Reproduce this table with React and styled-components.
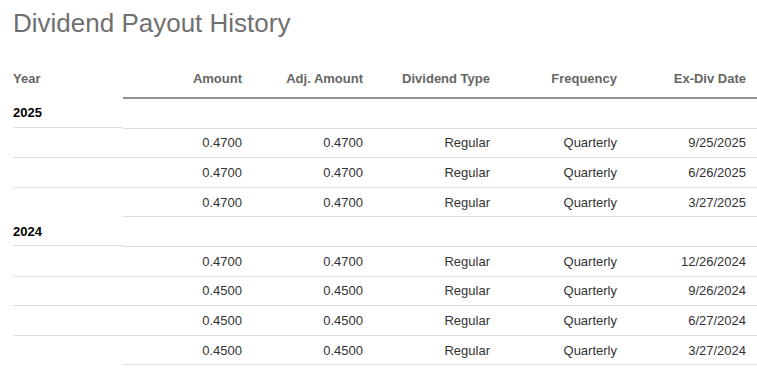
import React from "react";
import styled, { createGlobalStyle } from "styled-components";

const Global = createGlobalStyle`
  html, body { margin: 0; padding: 0; background: #fff; }
  body { font-family: "Liberation Sans", Arial, sans-serif; }
`;

const Page = styled.div`
  padding: 8px 0 0 13px;
  width: 757px;
  box-sizing: border-box;
`;

const Title = styled.h2`
  margin: 0;
  font-size: 26px;
  line-height: 30px;
  font-weight: normal;
  color: #707070;
`;

const Table = styled.div`
  margin-top: 21px;
  display: flex;
  flex-direction: column;
`;

const cols = "110px 130px 121px 127px 127px 1fr";

const HeaderRow = styled.div`
  display: grid;
  grid-template-columns: ${cols};
  height: 40px;
`;

const HeadCell = styled.div`
  display: flex;
  align-items: center;
  justify-content: ${(p) => (p.$left ? "flex-start" : "flex-end")};
  padding-right: ${(p) => (p.$left ? "0" : "11px")};
  font-size: 13px;
  font-weight: bold;
  color: #666;
  box-sizing: border-box;
  border-bottom: 2px solid ${(p) => (p.$left ? "transparent" : "#8c9196")};
`;

const YearRow = styled.div`
  display: grid;
  grid-template-columns: 110px 1fr;
  align-items: start;
  height: 29.6px;
`;

const YearCell = styled.div`
  height: 28.6px;
  box-sizing: border-box;
  border-bottom: 1px solid #dddddd;
  display: flex;
  align-items: center;
  font-size: 13px;
  font-weight: bold;
  color: #000;
`;

const YearFill = styled.div`
  height: 29.6px;
  box-sizing: border-box;
  border-bottom: 1px solid #dddddd;
`;

const DataRow = styled.div`
  display: grid;
  grid-template-columns: ${cols};
  height: 29.6px;
`;

const Cell = styled.div`
  box-sizing: border-box;
  height: 29.6px;
  border-bottom: 1px solid ${(p) => (p.$noBorder ? "transparent" : "#dddddd")};
  display: flex;
  align-items: center;
  justify-content: flex-end;
  padding-right: 11px;
  font-size: 13px;
  color: #333;
`;

const headers = ["Amount", "Adj. Amount", "Dividend Type", "Frequency", "Ex-Div Date"];

const data = [
  {
    year: "2025",
    rows: [
      ["0.4700", "0.4700", "Regular", "Quarterly", "9/25/2025"],
      ["0.4700", "0.4700", "Regular", "Quarterly", "6/26/2025"],
      ["0.4700", "0.4700", "Regular", "Quarterly", "3/27/2025"],
    ],
  },
  {
    year: "2024",
    rows: [
      ["0.4700", "0.4700", "Regular", "Quarterly", "12/26/2024"],
      ["0.4500", "0.4500", "Regular", "Quarterly", "9/26/2024"],
      ["0.4500", "0.4500", "Regular", "Quarterly", "6/27/2024"],
      ["0.4500", "0.4500", "Regular", "Quarterly", "3/27/2024"],
    ],
  },
];

export default function App() {
  return (
    <>
      <Global />
      <Page>
        <Title>Dividend Payout History</Title>
        <Table>
          <HeaderRow>
            <HeadCell $left>Year</HeadCell>
            {headers.map((h) => (
              <HeadCell key={h}>{h}</HeadCell>
            ))}
          </HeaderRow>
          {data.map((g) => (
            <React.Fragment key={g.year}>
              <YearRow>
                <YearCell>{g.year}</YearCell>
                <YearFill />
              </YearRow>
              {g.rows.map((r, i) => (
                <DataRow key={i}>
                  <Cell $noBorder={i === g.rows.length - 1} />
                  {r.map((v, j) => (
                    <Cell key={j}>{v}</Cell>
                  ))}
                </DataRow>
              ))}
            </React.Fragment>
          ))}
        </Table>
      </Page>
    </>
  );
}
